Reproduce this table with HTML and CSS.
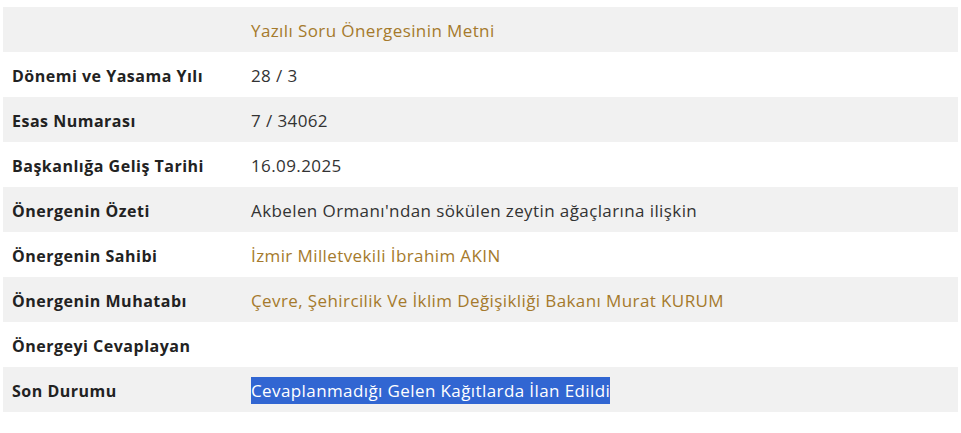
FILE: index.html
```html
<!DOCTYPE html>
<html lang="tr">
<head>
<meta charset="utf-8">
<link rel="stylesheet" href="styles.css">
</head>
<body>
<table class="info">
  <tr class="odd"><th></th><td><a class="link" href="#">Yazılı Soru Önergesinin Metni</a></td></tr>
  <tr><th>Dönemi ve Yasama Yılı</th><td>28 / 3</td></tr>
  <tr class="odd"><th>Esas Numarası</th><td>7 / 34062</td></tr>
  <tr><th>Başkanlığa Geliş Tarihi</th><td>16.09.2025</td></tr>
  <tr class="odd"><th>Önergenin Özeti</th><td>Akbelen Ormanı'ndan sökülen zeytin ağaçlarına ilişkin</td></tr>
  <tr><th>Önergenin Sahibi</th><td><a class="link" href="#">İzmir Milletvekili İbrahim AKIN</a></td></tr>
  <tr class="odd"><th>Önergenin Muhatabı</th><td><a class="link" href="#">Çevre, Şehircilik Ve İklim Değişikliği Bakanı Murat KURUM</a></td></tr>
  <tr><th>Önergeyi Cevaplayan</th><td></td></tr>
  <tr class="odd"><th>Son Durumu</th><td><span class="selected">Cevaplanmadığı Gelen Kağıtlarda İlan Edildi</span></td></tr>
</table>
</body>
</html>
```
FILE: styles.css
```css
html, body {
  margin: 0;
  padding: 0;
  background: #fff;
}
body {
  padding: 7px 3px 0 3px;
  font-family: "Open Sans", "Noto Sans", sans-serif;
  font-size: 16px;
  color: #222;
}
.info {
  width: 955px;
  border-collapse: collapse;
  border-spacing: 0;
}
.info tr {
  height: 45px;
  background: #fff;
}
.info tr.odd {
  background: #f1f1f1;
}
.info th {
  width: 230px;
  padding: 2px 0 0 9px;
  text-align: left;
  font-weight: 700;
  font-size: 16px;
  letter-spacing: 0.5px;
  color: #222;
  vertical-align: middle;
}
.info td {
  padding: 2px 0 0 9px;
  font-size: 17px;
  letter-spacing: 0.4px;
  color: #333;
  vertical-align: middle;
}
.link {
  color: #a57a2c;
  text-decoration: none;
}
.selected {
  background: #3166d2;
  color: #fff;
  padding: 2px 0;
}
```
